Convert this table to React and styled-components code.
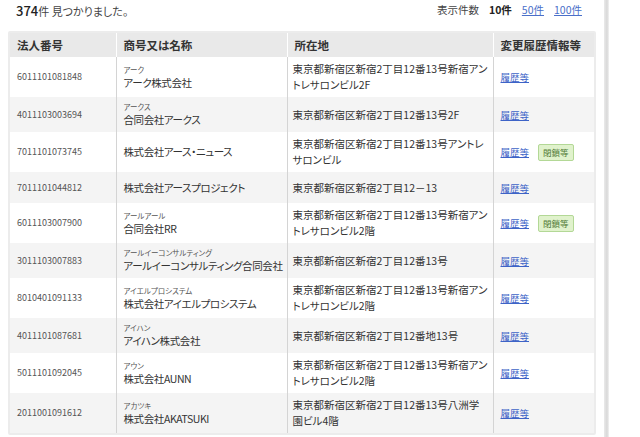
import React from 'react';
import styled, { createGlobalStyle } from 'styled-components';

const GlobalStyle = createGlobalStyle`
  html, body {
    margin: 0;
    padding: 0;
    background: #fff;
  }
  body {
    font-family: "Noto Sans CJK JP", "Noto Sans", sans-serif;
    color: #333;
    font-feature-settings: "palt";
  }
`;

const rows = [
  { no: '6011101081848', kana: 'アーク', name: 'アーク株式会社', addr: ['東京都新宿区新宿2丁目12番13号新宿アン', 'トレサロンビル2F'] },
  { no: '4011103003694', kana: 'アークス', name: '合同会社アークス', addr: ['東京都新宿区新宿2丁目12番13号2F'] },
  { no: '7011101073745', name: '株式会社アース・ニュース', addr: ['東京都新宿区新宿2丁目12番13号アントレ', 'サロンビル'], closed: true },
  { no: '7011101044812', name: '株式会社アースプロジェクト', addr: ['東京都新宿区新宿2丁目12－13'] },
  { no: '6011103007900', kana: 'アールアール', name: '合同会社RR', addr: ['東京都新宿区新宿2丁目12番13号新宿アン', 'トレサロンビル2階'], closed: true },
  { no: '3011103007883', kana: 'アールイーコンサルティング', name: 'アールイーコンサルティング合同会社', addr: ['東京都新宿区新宿2丁目12番13号'] },
  { no: '8010401091133', kana: 'アイエルプロシステム', name: '株式会社アイエルプロシステム', addr: ['東京都新宿区新宿2丁目12番13号新宿アン', 'トレサロンビル2階'] },
  { no: '4011101087681', kana: 'アイハン', name: 'アイハン株式会社', addr: ['東京都新宿区新宿2丁目12番地13号'] },
  { no: '5011101092045', kana: 'アウン', name: '株式会社AUNN', addr: ['東京都新宿区新宿2丁目12番13号新宿アン', 'トレサロンビル2階'] },
  { no: '2011001091612', kana: 'アカツキ', name: '株式会社AKATSUKI', addr: ['東京都新宿区新宿2丁目12番13号八洲学', '園ビル4階'] },
];

function App() {
  return (
    <Page>
      <GlobalStyle />
      <Main>
        <TopBar>
          <Count>
            <strong>374</strong>件 見つかりました。
          </Count>
          <PerPage>
            <span>表示件数</span>
            <Current>10件</Current>
            <PageLink href="#">50件</PageLink>
            <PageLink href="#">100件</PageLink>
          </PerPage>
        </TopBar>
        <TableBox>
          <Table>
            <colgroup>
              <col style={{ width: 106 }} />
              <col style={{ width: 171 }} />
              <col style={{ width: 206 }} />
              <col />
            </colgroup>
            <thead>
              <tr>
                <Th>法人番号</Th>
                <Th>商号又は名称</Th>
                <Th>所在地</Th>
                <Th>変更履歴情報等</Th>
              </tr>
            </thead>
            <tbody>
              {rows.map((r, i) => (
                <Row key={r.no} $alt={i % 2 === 1}>
                  <NumCell>{r.no}</NumCell>
                  <Td>
                    {r.kana && <Kana>{r.kana}</Kana>}
                    <Name>{r.name}</Name>
                  </Td>
                  <AddrCell>
                    {r.addr.map((line) => (
                      <AddrLine key={line}>{line}</AddrLine>
                    ))}
                  </AddrCell>
                  <Td>
                    <Actions>
                      <HistLink href="#">履歴等</HistLink>
                      {r.closed && <Badge>閉鎖等</Badge>}
                    </Actions>
                  </Td>
                </Row>
              ))}
            </tbody>
          </Table>
        </TableBox>
      </Main>
      <SideEdge />
    </Page>
  );
}

export default App;

const Page = styled.div`
  display: flex;
  width: 640px;
  height: 437px;
  overflow: hidden;
`;

const Main = styled.div`
  width: 586px;
  padding: 0 0 0 8px;
  display: flex;
  flex-direction: column;
`;

const SideEdge = styled.div`
  margin-left: 10px;
  width: 5px;
  background: linear-gradient(to right, #eaeaea, #d8d8d8 60%, #f2f2f2);
`;

const TopBar = styled.div`
  height: 31px;
  display: flex;
  align-items: flex-start;
  justify-content: space-between;
  padding: 1px 12px 0 8px;
  box-sizing: border-box;
`;

const Count = styled.div`
  font-size: 11px;
  color: #444;
  strong {
    font-size: 13px;
    font-weight: 500;
    color: #222;
  }
`;

const PerPage = styled.div`
  display: flex;
  gap: 10px;
  font-size: 10.5px;
  color: #444;
  padding-top: 1px;
`;

const Current = styled.span`
  font-weight: 700;
  color: #222;
`;

const PageLink = styled.a`
  color: #4a6fc9;
  text-decoration: underline;
`;

const TableBox = styled.div`
  border: 2px solid #ececec;
  border-radius: 2px;
  width: 584px;
`;

const Table = styled.table`
  width: 100%;
  border-collapse: collapse;
  table-layout: fixed;
`;

const Th = styled.th`
  background: #e9e9e9;
  height: 24px;
  padding: 0 7px;
  text-align: left;
  font-size: 11.5px;
  font-weight: 700;
  color: #333;
  border-left: 1px solid #fff;
  &:first-child {
    border-left: none;
  }
`;

const Row = styled.tr`
  background: ${(p) => (p.$alt ? '#f4f4f4' : '#fff')};
`;

const Td = styled.td`
  box-sizing: border-box;
  height: 31px;
  padding: 4px 5px 4px 7px;
  vertical-align: middle;
  border-left: 1px solid #d4d4d4;
  font-size: 11px;
  line-height: 16px;
  color: #333;
`;

const NumCell = styled(Td)`
  border-left: none;
  font-size: 9px;
  color: #555;
`;

const AddrCell = styled(Td)`
  padding-left: 5px;
`;

const Kana = styled.div`
  font-size: 7.5px;
  line-height: 11px;
  color: #555;
`;

const Name = styled.div`
  font-size: 10.5px;
  letter-spacing: -0.4px;
  line-height: 16px;
  white-space: nowrap;
`;

const AddrLine = styled.div`
  white-space: nowrap;
  font-size: 10.5px;
  line-height: 16px;
`;

const Actions = styled.div`
  display: flex;
  align-items: center;
  gap: 9px;
`;

const HistLink = styled.a`
  color: #3d63c7;
  font-size: 9.5px;
  text-decoration: underline;
`;

const Badge = styled.span`
  background: #e0f2cc;
  border: 1px solid #b3d896;
  color: #4f7a35;
  font-size: 8.5px;
  line-height: 13px;
  padding: 1px 4px;
  border-radius: 2px;
`;
